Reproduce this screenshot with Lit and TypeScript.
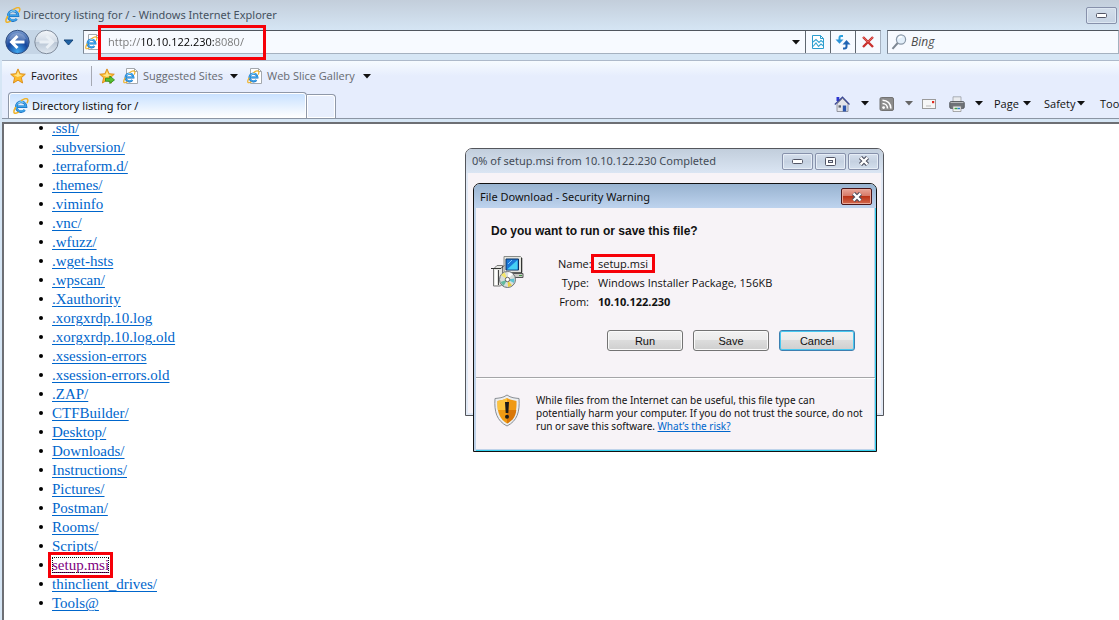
import { LitElement, html, svg, css, nothing } from "lit";
import { customElement, property } from "lit/decorators.js";

const entries = [
  ".ssh/", ".subversion/", ".terraform.d/", ".themes/", ".viminfo", ".vnc/", ".wfuzz/",
  ".wget-hsts", ".wpscan/", ".Xauthority", ".xorgxrdp.10.log", ".xorgxrdp.10.log.old",
  ".xsession-errors", ".xsession-errors.old", ".ZAP/", "CTFBuilder/", "Desktop/",
  "Downloads/", "Instructions/", "Pictures/", "Postman/", "Rooms/", "Scripts/",
  "setup.msi", "thinclient_drives/", "Tools@",
];

const eMark = svg`
  <path d="M11.800 12A4.900 4.900 0 1 1 13 8.700H4.500" fill="none" stroke="#1a6fc0" stroke-width="2.600"/>
  <path d="M11.500 11.900A4.800 4.800 0 1 1 12.900 8.600H4.500" fill="none" stroke="#3ba4ea" stroke-width="1.500"/>
  <path d="M4.800 5.600C6 4 8.400 3.400 10.400 4.300" fill="none" stroke="#a4e0fb" stroke-width="1"/>
  <path d="M2.500 9.500C-.3 14.200.6 16.800 5.200 14.400M8.500 2.400C13-.6 16.400.2 14.200 4.600" fill="none" stroke="#efb32a" stroke-width="1.500" stroke-linecap="round"/>`;

const star = svg`<path d="M8 .9l2.1 4.8 5.2.5-3.9 3.5 1.2 5.3L8 12.2 3.4 15l1.2-5.3L.7 6.2l5.2-.5Z" fill="#fdbb2c" stroke="#d98a14" stroke-width=".9"/><path d="M8 3l1.4 3.5 3.3.4-5 2.1-4.2-2 3.2-.5Z" fill="#ffe58b"/>`;

const icons = {
  ie: svg`${eMark}`,
  iePage: svg`<path d="M3.500.500h8l3 3v12h-11Z" fill="#fff" stroke="#a3a8ad"/><path d="M11.500.500v3h3" fill="none" stroke="#a3a8ad"/><g transform="translate(0 2.500) scale(.8)">${eMark}</g>`,
  star,
  starAdd: svg`${star}<path d="M6.500 10.200h4.300V8l4.700 3.900-4.700 3.700v-2.300H6.500Z" fill="#58c12f" stroke="#28851a" stroke-width=".8"/>`,
  compat: svg`<path d="M2.500 1.500h8l3 3v10h-11Z" fill="#fff" stroke="#2b9ccd"/><path d="M10.500 1.500v3h3" fill="none" stroke="#2b9ccd"/><path d="M3 8l3-2.500 3 3 2-2 2.500 2M3 12.500l3-3.500 2.500 3.500 2.500-2.500 2.500 2" fill="none" stroke="#36a4d2" stroke-width="1.100"/>`,
  refresh: svg`<path d="M8 2H6Q4.500 2 4.500 4v2" fill="none" stroke="#2ba0dd" stroke-width="2"/><path d="M.5 5.500h8L4.500 9.800Z" fill="#2b93d8"/><path d="M8 14.500h1.500q2 0 2-2V10" fill="none" stroke="#2064b4" stroke-width="2"/><path d="M7.500 10.500h8L11.500 6Z" fill="#2064b4"/>`,
  stop: svg`<path d="M3 3l10 10M13 3L3 13" stroke="#c9302e" stroke-width="2.400"/><path d="M3 3l5 5M13 3L8 8" stroke="#e2605a" stroke-width="1"/>`,
  search: svg`<circle cx="10" cy="5.500" r="4.600" fill="#e3effa" stroke="#8a98a8" stroke-width="1.200"/><path d="M7.500 4.500C8 3 9.500 2.500 11 2.800" fill="none" stroke="#fff" stroke-width="1.400"/><path d="M6.700 9L1.500 14.800" stroke="#7d8793" stroke-width="2"/>`,
  home: svg`<path d="M2.500 1h2.800v4H2.500Z" fill="#2d36d0"/><path d="M3 8l5.500-5.500L14 8v7.500H3Z" fill="#e3e4ea" stroke="#80818b" stroke-width=".8"/><path d="M.8 8.500L8.500 1.200l7 7.300" fill="none" stroke="#3a4690" stroke-width="1.200"/><path d="M8.800 9.500h3.400v6H8.800Z" fill="#2c55ac"/><path d="M4.500 9.300h2.500v2.300H4.500Z" fill="#5c636c"/>`,
  rss: svg`<rect x="1" y="1.500" width="13.500" height="13" rx="1.500" fill="#8c8c8c" stroke="#737373"/><circle cx="4.600" cy="11.600" r="1.400" fill="#fff"/><path d="M3.500 7.500c3 0 5 2.200 5 5M3.500 4.200c5 0 8.400 3.400 8.400 8.300" fill="none" stroke="#fff" stroke-width="1.600"/>`,
  mail: svg`<rect x=".5" y="3.500" width="13" height="9" fill="#f6f6f6" stroke="#9b9b9b"/><path d="M10 5h2.200v2.200H10Z" fill="#e02a20"/><path d="M4 10h5" stroke="#bbb"/>`,
  print: svg`<path d="M4 .8h8v6H4Z" fill="#e9ebee" stroke="#999ea5" stroke-width=".8"/><rect x=".7" y="5.500" width="14.600" height="7" rx="1.500" fill="#6e7277" stroke="#4c5055" stroke-width=".8"/><path d="M1.500 6.500h13" stroke="#b5b8bb"/><path d="M4 10.200h8v5.300H4Z" fill="#f4f5f5" stroke="#888" stroke-width=".7"/><path d="M5.500 12.500h3" stroke="#43a047" stroke-width="1.500"/><path d="M8.500 12.500h2.500" stroke="#2a7fc8" stroke-width="1.500"/>`,
};

@customElement("ui-icon")
class UiIcon extends LitElement {
  @property() name: keyof typeof icons = "ie";
  static styles = css`
    :host { display: block; flex: none; width: 16px; height: 16px; }
    .glyph { display: block; width: 100%; height: 100%; }
  `;
  render() {
    return html`<svg class="glyph" viewBox="0 0 16 16" aria-hidden="true">${icons[this.name]}</svg>`;
  }
}

const caret = html`<svg width="8" height="5" viewBox="0 0 8 5" aria-hidden="true"><path d="M0 0h8L4 4.500Z" fill="currentColor"/></svg>`;
const glyphMin = html`<svg width="11" height="5" viewBox="0 0 11 5" aria-hidden="true"><rect x=".5" y=".5" width="10" height="4" rx="1" fill="#fff" stroke="#535666"/></svg>`;
const glyphMax = html`<svg width="11" height="9" viewBox="0 0 11 9" aria-hidden="true"><rect x=".5" y=".5" width="10" height="8" rx="1" fill="#fff" stroke="#535666"/><rect x="3.500" y="3.500" width="4" height="2" fill="#dfe6f0" stroke="#535666"/></svg>`;
const glyphClose = html`<svg width="12" height="10" viewBox="0 0 12 10" aria-hidden="true"><path d="M2.500 1.500l7 7M9.500 1.500l-7 7" stroke="#4b4e5e" stroke-width="4.400"/><path d="M2.500 1.500l7 7M9.500 1.500l-7 7" stroke="#fff" stroke-width="2.400"/></svg>`;

@customElement("download-windows")
class DownloadWindows extends LitElement {
  static styles = css`
    :host { font: 11px/19px "Open Sans", sans-serif; color: #111; }
    *, *::before, *::after { box-sizing: border-box; }
    button { font: inherit; color: inherit; padding: 0; }
    .progress, .warning { position: absolute; background: #f7f3f7; }
    .progress {
      left: 465px; top: 148px; width: 419px; height: 268px;
      border: 1px solid #54565c; border-radius: 7px 7px 0 0; box-shadow: inset 0 0 0 2px #e1e9f5;
    }
    .warning {
      left: 473px; top: 183px; width: 404px;
      border: 1px solid #111; border-radius: 7px 7px 0 0;
      box-shadow: inset 2px 0 #bfd3ea, inset -1px -1px #35d0ee, inset -2px -2px #bfd3ea;
      padding-bottom: 2px;
    }
    .bar { display: flex; align-items: center; height: 24px; padding: 0 4px 0 6px; border-radius: 6px 6px 0 0; }
    .progress .bar { background: linear-gradient(#c2cedc, #dae5f3); color: #444c57; }
    .warning .bar { background: linear-gradient(#98b3d0, #bed3ee); padding-top: 1px; }
    .title { flex: 1; margin: 0; font: 11px/18px "Noto Sans", sans-serif; white-space: nowrap; }
    .caps { display: flex; gap: 2px; }
    .cap {
      display: grid; place-items: center; width: 31px; height: 17px; border: 1px solid #8791ab;
      border-radius: 2px; background: linear-gradient(#d5dfec, #c5d1e1 50%, #d3dfed); box-shadow: inset 0 0 0 1px #e6edf6;
    }
    .close { border-color: #4c1518; background: linear-gradient(#e8a598, #d67765 48%, #bb3419 50%, #d3694e); box-shadow: inset 0 0 0 1px #e9a99a; }
    .question { margin: 14px 17px 0; font: bold 12px/18px "Liberation Sans", sans-serif; }
    .details { display: flex; gap: 34px; padding: 14px 17px 0; }
    .picture { margin-top: 2px; }
    .facts { display: grid; grid-template-columns: 31px auto; justify-content: start; column-gap: 9px; margin: 0; }
    .facts dt { text-align: right; }
    .facts dd { margin: 0; white-space: nowrap; }
    .facts .bold { font-weight: 700; }
    .marked { position: relative; }
    .marked::after { content: ""; position: absolute; inset: 0 auto 0 -7px; width: 64px; border: 3px solid #f60008; }
    .actions { display: flex; justify-content: flex-end; gap: 10px; padding: 19px 20px 26px; border-bottom: 1px solid #a5a5a8; margin: 0 1px 0 2px; }
    .action {
      width: 76px; height: 21px; border: 1px solid #737373; border-radius: 3px;
      background: linear-gradient(#f2f2f2, #ebebeb 48%, #dcdcdc 50%, #cfcfcf); box-shadow: inset 0 0 0 1px #fafafa;
      font: 11px/18px "Liberation Sans", sans-serif;
    }
    .default { border-color: #3c7fb1; box-shadow: inset 0 0 0 1px #48c8f0; }
    .risk { display: flex; gap: 15px; padding: 15px 7px 16px 17px; border-top: 1px solid #fff; margin: 0 1px 0 2px; }
    .risk p { margin: 0; font: 10px/13px "Noto Sans", sans-serif; }
    .risk a { color: #0066cc; }
    svg { display: block; flex: none; }
  `;
  render() {
    return html`
      <section class="progress" aria-label="Download progress">
        <header class="bar">
          <h2 class="title">0% of setup.msi from 10.10.122.230 Completed</h2>
          <div class="caps">
            <button class="cap" aria-label="Minimize">${glyphMin}</button>
            <button class="cap" aria-label="Maximize">${glyphMax}</button>
            <button class="cap" aria-label="Close">${glyphClose}</button>
          </div>
        </header>
      </section>
      <section class="warning" role="dialog" aria-label="File Download - Security Warning">
        <header class="bar">
          <h2 class="title">File Download - Security Warning</h2>
          <button class="cap close" aria-label="Close">${glyphClose}</button>
        </header>
        <h3 class="question">Do you want to run or save this file?</h3>
        <div class="details">
          <svg class="picture" width="33" height="34" viewBox="0 0 33 34" aria-hidden="true">
            <path d="M13 .500h16.500l1.500 1.500v14.500H13Z" fill="#e4e5e0" stroke="#8a8c88"/>
            <path d="M30.500 2v15H14" fill="none" stroke="#333"/>
            <path d="M15 3h12.500v11H15Z" fill="#1b78d8" stroke="#0c3264"/>
            <path d="M16 13.500L26.500 4v9.500Z" fill="#45d0f5"/><path d="M17 8l4-4" stroke="#7fc6ff"/>
            <path d="M20 17.500h12v4H22Z" fill="#c9cac5" stroke="#555"/><path d="M28 19.500h3" stroke="#3c9a44"/>
            <path d="M2.500 13L6 9.500h5.500V28l-2 2h-7Z" fill="#e6e6e2" stroke="#777"/>
            <path d="M0 12.500h10l3-3" fill="none" stroke="#333"/>
            <path d="M7.500 14v15" stroke="#444"/><path d="M5 14v15" stroke="#fff" stroke-width="2"/>
            <circle cx="16.500" cy="23.500" r="8" fill="#d9dedb" stroke="#6b7075"/>
            <path d="M16.500 23.500L10 19l3.500-2.700Z" fill="#f4e66b"/><path d="M16.500 23.500l1-7.500 4.500 2Z" fill="#fff"/>
            <path d="M16.500 23.500l7-1-.5 4.500Z" fill="#5fc4d2"/><path d="M16.500 23.500l4.500 6-4 1.500Z" fill="#e9d040"/><path d="M16.500 23.500l-4 6.500-3-4Z" fill="#62b9a0"/>
            <circle cx="16.500" cy="23.500" r="2.200" fill="#fff" stroke="#666"/>
          </svg>
          <dl class="facts">
            <dt>Name:</dt><dd class="marked">setup.msi</dd>
            <dt>Type:</dt><dd>Windows Installer Package, 156KB</dd>
            <dt>From:</dt><dd class="bold">10.10.122.230</dd>
          </dl>
        </div>
        <div class="actions">
          <button class="action">Run</button>
          <button class="action">Save</button>
          <button class="action default">Cancel</button>
        </div>
        <footer class="risk">
          <svg width="28" height="34" viewBox="0 0 28 34" aria-hidden="true">
            <path d="M14 1c4 3 8 3 12 3.500C27 18 24 27 14 32 4 27 1 18 2 4.500 6 4 10 4 14 1Z" fill="#eceef0" stroke="#8a8f95"/>
            <path d="M14 4c3 2 6.500 2.500 9.500 3C24 18 21.500 25 14 29.500 6.500 25 4 18 4.500 7 7.500 6.500 11 6 14 4Z" fill="#f09a13"/>
            <path d="M14 4v12H4.700L4.500 7C7.500 6.500 11 6 14 4Z" fill="#fcc33c"/>
            <path d="M14 16h9.300c-.8 6.500-3.300 10.500-9.300 13.500Z" fill="#d97708"/>
            <path d="M12 8h4l-.7 11h-2.600Z" fill="#1a1a1a"/><circle cx="14" cy="22.700" r="2" fill="#1a1a1a"/>
          </svg>
          <p>While files from the Internet can be useful, this file type can<br>potentially harm your computer. If you do not trust the source, do not<br>run or save this software. <a href="#risk">What’s the risk?</a></p>
        </footer>
      </section>`;
  }
}

@customElement("app-root")
class AppRoot extends LitElement {
  static styles = css`
    :host {
      display: flex; flex-direction: column; position: relative; height: 100vh; overflow: hidden;
      background: #d6e6f5; color: #111; font: 11px/16px "Open Sans", sans-serif;
    }
    *, *::before, *::after { box-sizing: border-box; }
    button, input { font: inherit; color: inherit; padding: 0; border: 0; background: none; min-width: 0; }
    svg { display: block; flex: none; }
    .title { display: flex; align-items: center; gap: 2px; height: 30px; padding: 0 2px 0 5px; background: linear-gradient(#c3cedb, #d5e5f4); }
    .title h1 { flex: 1; margin: 0; font: 11px/16px "Noto Sans", sans-serif; color: #46525f; }
    .cap { display: grid; place-items: center; width: 31px; height: 17px; border: 1px solid #8791ab; border-radius: 2px; background: linear-gradient(#d3deeb, #c6d3e3); box-shadow: inset 0 0 0 1px #dde7f2; }
    .nav { display: flex; height: 30px; padding-left: 3px; }
    .travel { display: flex; align-items: center; width: 80px; height: 24px; }
    .address { position: relative; flex: 1; display: flex; height: 24px; margin-right: 6px; border: 1px solid #a5b1c0; border-top-color: #50565e; border-left-color: #7c8794; background: #f7faff; }
    .address ui-icon { margin: 3px 7px 0 1px; }
    .url {
      flex: 1; outline: 0; color: transparent;
      background: linear-gradient(90deg, #757575 35px, #000 35px, #000 106px, #757575 106px);
      -webkit-background-clip: text; background-clip: text;
    }
    .address::after { content: ""; position: absolute; left: 14px; top: -6px; width: 168px; height: 35px; border: 3px solid #f60008; pointer-events: none; }
    .tool { display: grid; place-items: center; width: 25px; border-left: 1px solid #5f6770; }
    .address .tool ui-icon { margin: 0; }
    .drop { width: 19px; border: 0; }
    .search { flex: 0 0 232px; display: flex; align-items: center; gap: 4px; height: 24px; padding-left: 3px; border: 1px solid #a5b1c0; border-top-color: #50565e; border-left-color: #7c8794; background: #f7faff; }
    .search input { font: italic 12px/16px "Open Sans", sans-serif; outline: 0; }
    .search input::placeholder { color: #4c4c4c; opacity: 1; }
    .bars { margin-left: 2px; border-top: 1px solid #adb9ca; background: linear-gradient(#f6fbff, #e6edfd 15px); }
    .favs { display: flex; align-items: center; height: 30px; padding-left: 8px; }
    .fav { display: flex; align-items: center; gap: 4px; color: #666a70; white-space: nowrap; }
    .fav .wide { width: 83px; text-align: left; }
    .fav .wider { width: 92px; text-align: left; }
    .fav.main { width: 81px; gap: 5px; color: #111; }
    .add { width: 32px; padding-left: 7px; height: 20px; border-left: 1px solid #a5a9b3; }
    .fav svg { color: #111; }
    .sites { width: 124px; }
    .tabs { display: flex; height: 28px; padding: 1px 0 0 6px; border-bottom: 1px solid #8b95a4; }
    .tab { display: flex; align-items: center; gap: 3px; width: 299px; padding: 0 4px; border: 1px solid #8f98a8; border-bottom: 0; border-radius: 4px 4px 0 0; background: linear-gradient(#c6e0ff, #e9f3ff 60%, #fff); box-shadow: inset 0 0 0 1px #fff; font-family: "Noto Sans", sans-serif; }
    .new { width: 29px; margin-top: 2px; border: 1px solid #8f98a8; border-left: 0; border-bottom: 0; border-radius: 0 4px 0 0; background: #e8effd; box-shadow: inset 0 0 0 1px #fff; }
    .commands { display: flex; width: 285px; margin-left: auto; padding-bottom: 3px; overflow: hidden; white-space: nowrap; }
    .cmd { display: flex; align-items: center; flex: none; }
    .cmd.home { width: 45px; gap: 11px; }
    .cmd.rss { width: 43px; gap: 10px; }
    .cmd.rss svg { color: #666; }
    .cmd.mail { width: 27px; }
    .cmd.print { width: 45px; gap: 10px; }
    .cmd.page { width: 50px; gap: 4px; }
    .cmd.safety { width: 56px; gap: 2px; }
    .listing { flex: 1; min-height: 0; overflow: hidden; margin: 3px 0 0 2px; border: solid #6d6f74; border-width: 2px 0 0 2px; background: #fff; }
    .list { margin: -5px 0 0; padding-left: 48px; font: 15px/19px "Liberation Serif", serif; list-style: none; }
    .list li { position: relative; }
    .list li::before { content: ""; position: absolute; left: -13px; top: 7px; width: 4px; height: 4px; border-radius: 50%; background: #000; }
    .list a { color: #0066cc; text-underline-offset: 2px; }
    .list .picked { color: #800080; outline: 1px dotted #111; outline-offset: -1px; }
    .hit::after { content: ""; position: absolute; left: -4px; top: -4px; width: 65px; height: 26px; border: 3px solid #f60008; }
  `;
  render() {
    return html`
      <header class="title">
        <ui-icon name="ie"></ui-icon>
        <h1>Directory listing for / - Windows Internet Explorer</h1>
        <button class="cap" aria-label="Minimize">${glyphMin}</button>
      </header>
      <div class="nav">
        <div class="travel">
          <button aria-label="Back and forward">
            <svg width="76" height="28" viewBox="0 0 76 28">
              <defs>
                <radialGradient id="back" cx=".5" cy=".9" r=".9"><stop stop-color="#3fa6ee"/><stop offset=".5" stop-color="#17469c"/><stop offset="1" stop-color="#7d9dd0"/></radialGradient>
                <linearGradient id="fwd" x2="0" y2="1"><stop stop-color="#f3f6fa"/><stop offset=".48" stop-color="#d3dce7"/><stop offset=".5" stop-color="#b8c5d4"/><stop offset="1" stop-color="#dfe8f1"/></linearGradient>
              </defs>
              <path d="M14 2h29a12 12 0 0 1 0 24H14Z" fill="#b9c9dc" opacity=".6"/>
              <circle cx="14.500" cy="14" r="11.700" fill="url(#back)" stroke="#324f80"/>
              <path d="M6 11a9 9 0 0 1 17 0c-5 2-12 2-17 0Z" fill="#fff" opacity=".22"/>
              <path d="M14.500 8l-6 6 6 6M9 14h12.500" fill="none" stroke="#fff" stroke-width="3"/>
              <circle cx="43.500" cy="14" r="11.700" fill="url(#fwd)" stroke="#808c9c"/>
              <path d="M43.500 8l6 6-6 6M49 14H36.500" fill="none" stroke="#e9eff5" stroke-width="3"/>
              <path d="M61 12h9l-4.500 5Z" fill="#1f63a6" stroke="#17477a"/>
            </svg>
          </button>
        </div>
        <div class="address">
          <ui-icon name="iePage"></ui-icon>
          <input class="url" aria-label="Address" value="http://10.10.122.230:8080/">
          <button class="tool drop" aria-label="Show addresses">${caret}</button>
          <button class="tool" aria-label="Compatibility view"><ui-icon name="compat"></ui-icon></button>
          <button class="tool" aria-label="Refresh"><ui-icon name="refresh"></ui-icon></button>
          <button class="tool" aria-label="Stop"><ui-icon name="stop"></ui-icon></button>
        </div>
        <div class="search">
          <ui-icon name="search"></ui-icon>
          <input aria-label="Search" placeholder="Bing">
        </div>
      </div>
      <div class="bars">
        <nav class="favs">
          <button class="fav main"><ui-icon name="star"></ui-icon>Favorites</button>
          <button class="add" aria-label="Add to favorites"><ui-icon name="starAdd"></ui-icon></button>
          <button class="fav sites"><ui-icon name="iePage"></ui-icon><span class="wide">Suggested Sites</span>${caret}</button>
          <button class="fav"><ui-icon name="iePage"></ui-icon><span class="wider">Web Slice Gallery</span>${caret}</button>
        </nav>
        <div class="tabs">
          <button class="tab"><ui-icon name="ie"></ui-icon>Directory listing for /</button>
          <button class="new" aria-label="New tab"></button>
          <div class="commands">
            <button class="cmd home" aria-label="Home"><ui-icon name="home"></ui-icon>${caret}</button>
            <button class="cmd rss" aria-label="Feeds"><ui-icon name="rss"></ui-icon>${caret}</button>
            <button class="cmd mail" aria-label="Read mail"><ui-icon name="mail"></ui-icon></button>
            <button class="cmd print" aria-label="Print"><ui-icon name="print"></ui-icon>${caret}</button>
            <button class="cmd page">Page${caret}</button>
            <button class="cmd safety">Safety${caret}</button>
            <button class="cmd">Tools</button>
          </div>
        </div>
      </div>
      <main class="listing">
        <ul class="list">
          ${entries.map((name) => {
            const picked = name === "setup.msi";
            return html`<li class=${picked ? "hit" : nothing}><a class=${picked ? "picked" : nothing} href="#${name}">${name}</a></li>`;
          })}
        </ul>
      </main>
      <download-windows></download-windows>`;
  }
}
